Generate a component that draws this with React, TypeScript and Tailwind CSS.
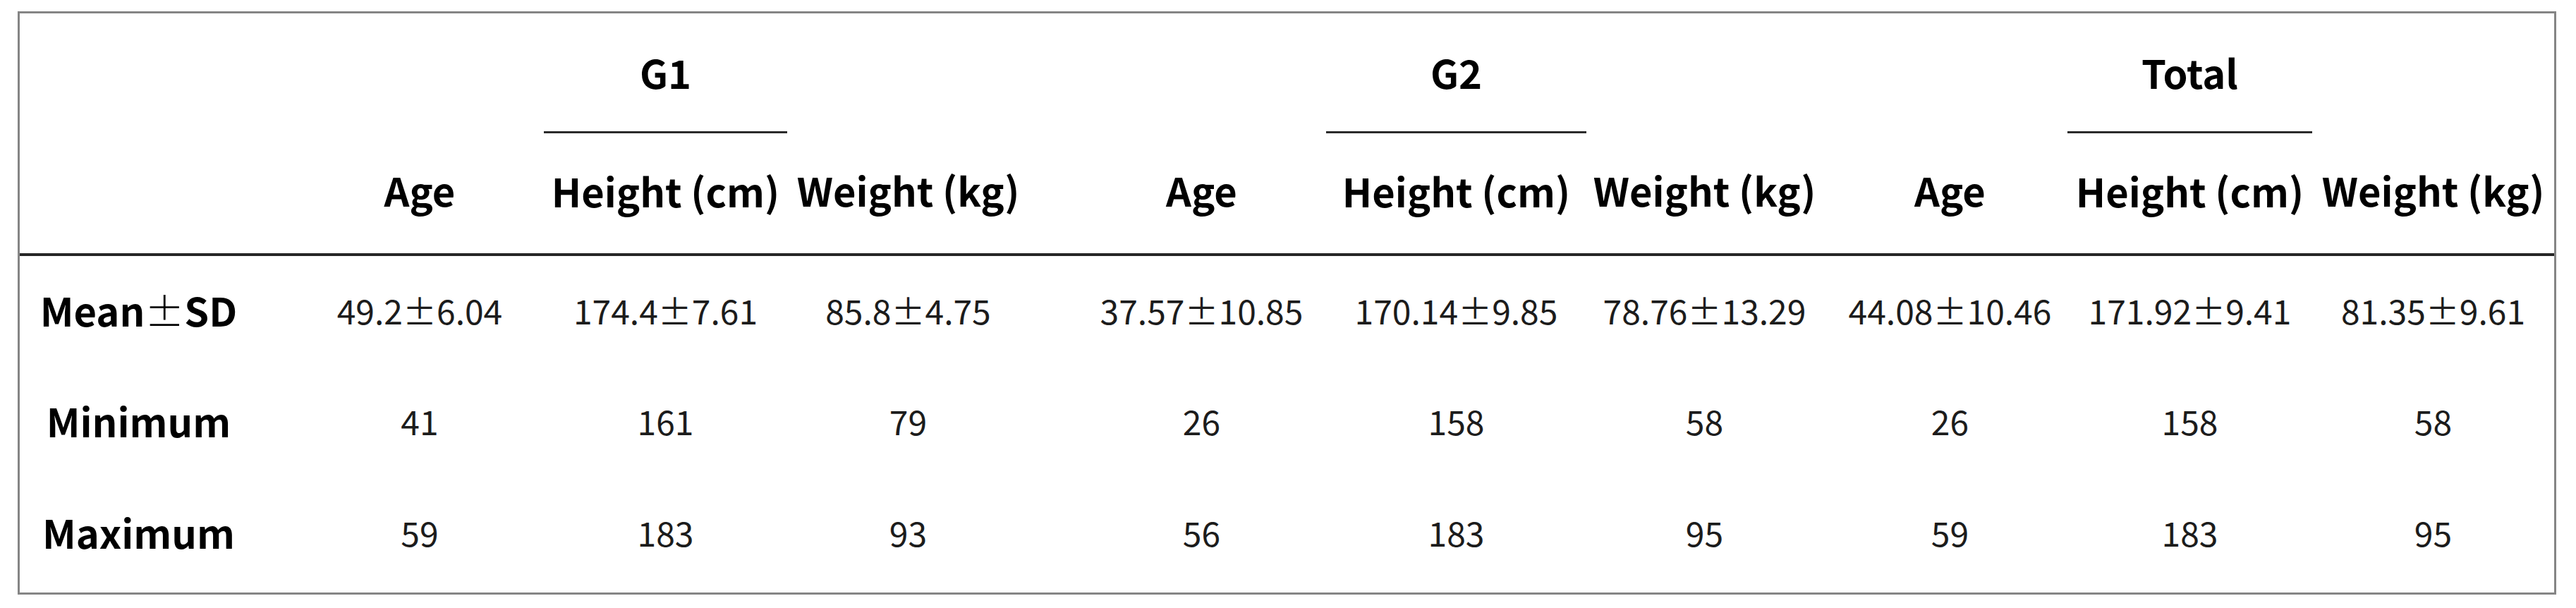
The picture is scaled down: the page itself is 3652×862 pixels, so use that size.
const groups = ["G1", "G2", "Total"];
const subHeads = ["Age", "Height (cm)", "Weight (kg)"];

const rows = [
  {
    label: "Mean",
    values: [
      "49.2±6.04", "174.4±7.61", "85.8±4.75",
      "37.57±10.85", "170.14±9.85", "78.76±13.29",
      "44.08±10.46", "171.92±9.41", "81.35±9.61",
    ],
  },
  { label: "Minimum", values: ["41", "161", "79", "26", "158", "58", "26", "158", "58"] },
  { label: "Maximum", values: ["59", "183", "93", "56", "183", "95", "59", "183", "95"] },
];

// per-column nudges so text sits where it does in the source table
const shift = ["pr-[30px]", "pl-[24px]", "", "pr-[36px]", "pl-[32px]", "", "pr-[6px]", "pl-[8px]", "", ""];

export default function App() {
  return (
    <div className="w-[3652px] h-[862px] bg-white pt-[16px] pl-[25px] font-['Noto_Sans_CJK_JP',sans-serif] text-black">
      <div className="w-[3599px] h-[827px] border-[3px] border-[#858585]">
        <table className="w-full table-fixed border-collapse">
          <colgroup>
            <col className="w-[367px]" />
            <col className="w-[376px]" />
            <col className="w-[345px]" />
            <col className="w-[379px]" />
            <col className="w-[385px]" />
            <col className="w-[369px]" />
            <col className="w-[341px]" />
            <col className="w-[341px]" />
            <col className="w-[347px]" />
            <col className="w-[343px]" />
          </colgroup>
          <thead>
            <tr className="h-[168px]">
              <th />
              {groups.map((g) => (
                <>
                  <th key={g + "a"} />
                  <th key={g} className="border-b-[3px] border-[#2b2b2b] text-[56px] font-bold leading-none">
                    {g}
                  </th>
                  <th key={g + "c"} />
                </>
              ))}
            </tr>
            <tr className="h-[174px] border-b-[4px] border-[#262626]">
              <th />
              {groups.map((g) =>
                subHeads.map((s, i) => (
                  <th
                    key={g + s}
                    className={`pb-[8px] text-[56px] font-bold leading-none whitespace-nowrap ${shift[groups.indexOf(g) * 3 + i + 1]}`}
                  >
                    {s}
                  </th>
                ))
              )}
            </tr>
          </thead>
          <tbody>
            {rows.map((r) => (
              <tr key={r.label} className="h-[158px]">
                <td className={`pb-[4px] text-center text-[56px] font-bold leading-none whitespace-nowrap ${shift[0]}`}>
                  {r.label}
                  {r.label === "Mean" && (
                    <>
                      <span className="font-light [font-feature-settings:'fwid']">±</span>SD
                    </>
                  )}
                </td>
                {r.values.map((v, i) => (
                  <td
                    key={i}
                    className={`pb-[4px] text-center text-[48px] leading-none text-[#1c1c1c] whitespace-nowrap ${shift[i + 1]}`}
                  >
                    {v}
                  </td>
                ))}
              </tr>
            ))}
          </tbody>
        </table>
      </div>
    </div>
  );
}
